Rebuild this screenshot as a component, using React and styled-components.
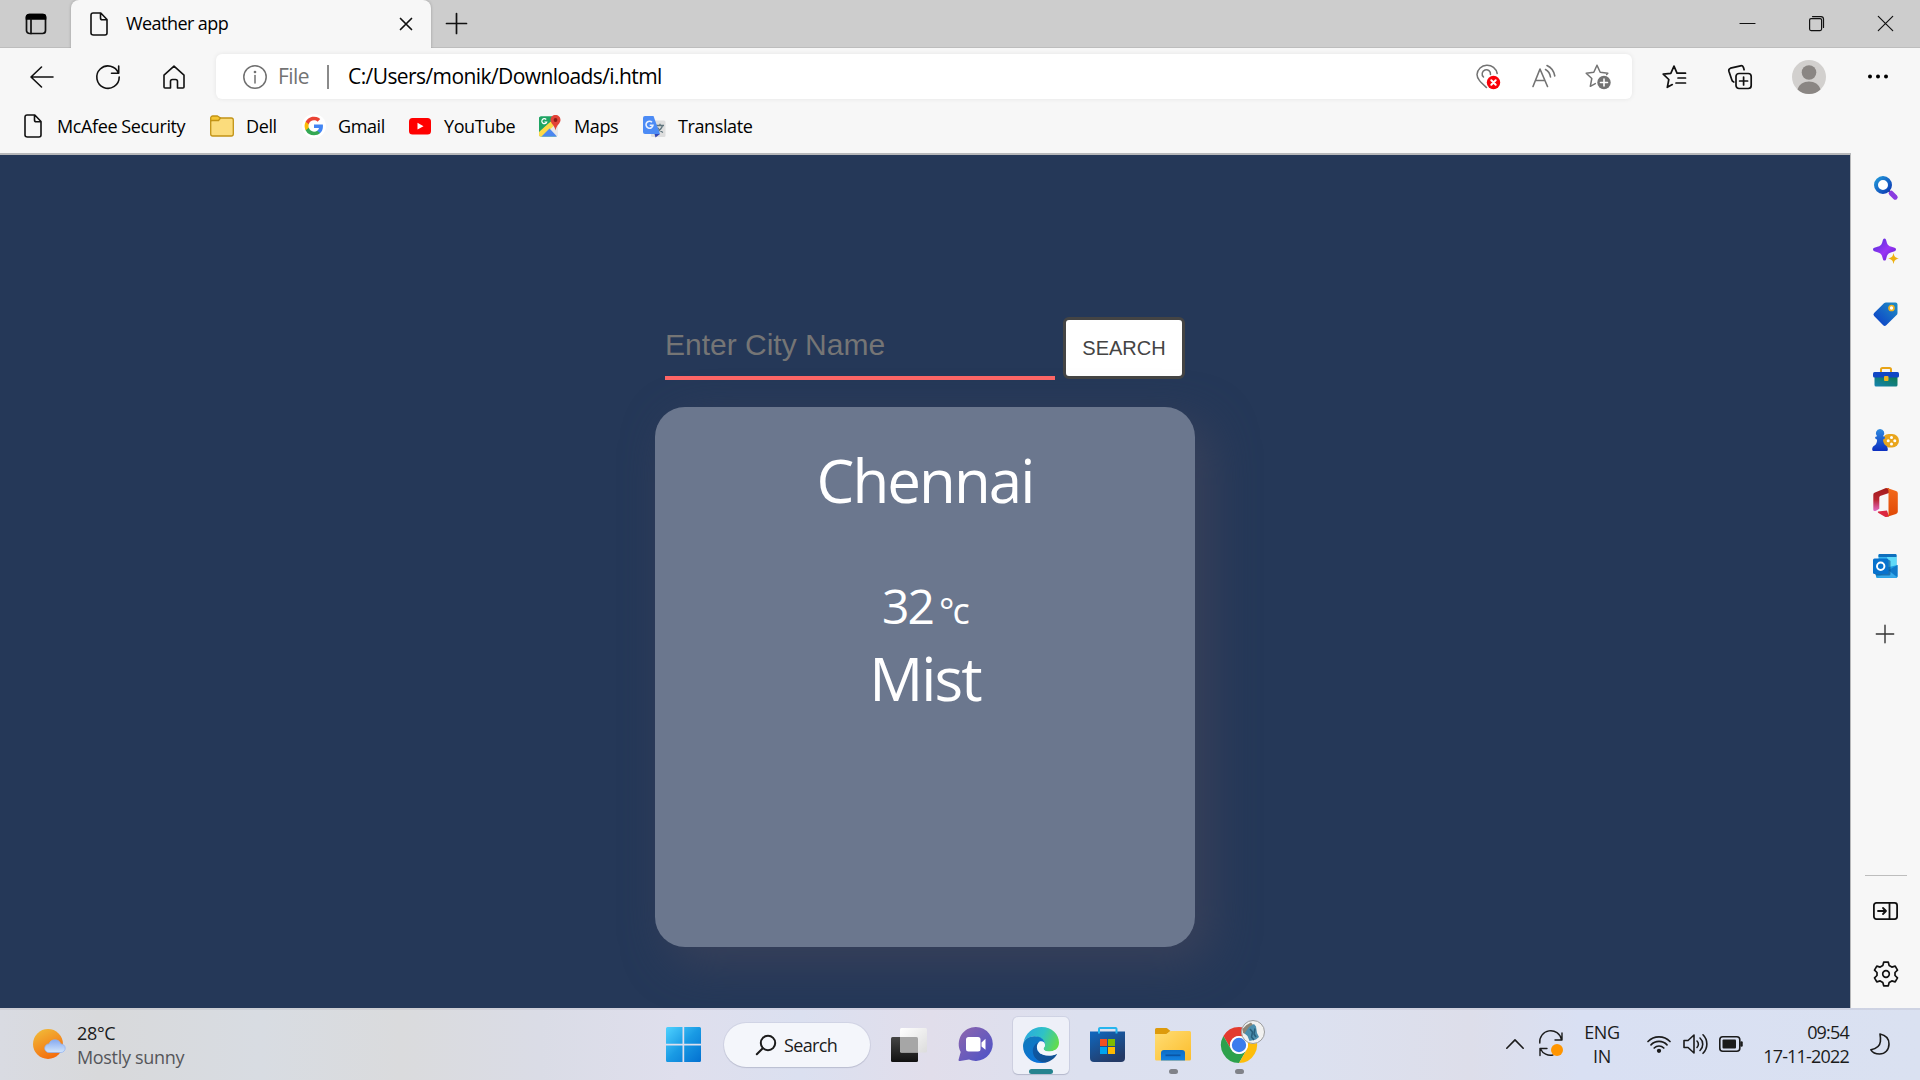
import React from "react";
import styled, { createGlobalStyle } from "styled-components";

const GlobalStyle = createGlobalStyle`
  * { box-sizing: border-box; }
  html, body { margin: 0; padding: 0; overflow: hidden; }
  body { font-family: "Open Sans", "Noto Sans", sans-serif; font-size: 18px; letter-spacing: -0.022em; color: #000; }
  svg { display: block; flex: none; overflow: visible; }
`;

const Screen = styled.div`
  width: 1920px;
  height: 1080px;
  display: flex;
  flex-direction: column;
  background: #f7f7f7;
  white-space: nowrap;
`;

/* ---------- Browser title bar ---------- */
const TitleBar = styled.header`
  height: 48px;
  display: flex;
  background: #cdcdcd;
  box-shadow: inset 0 -1px 0 #bdbdbd;
`;
const TabActions = styled.div`
  width: 71px;
  padding: 13px 0 0 25px;
`;
const Tab = styled.div`
  width: 360px;
  height: 48px;
  display: flex;
  align-items: center;
  padding: 0 18px 0 19px;
  background: #f7f7f7;
  border-radius: 8px 8px 0 0;
  box-shadow: 0 0 3px rgba(0, 0, 0, 0.25);
  clip-path: inset(0 -3px 0 -3px);
`;
const TabTitle = styled.span`
  flex: 1;
  margin-left: 18px;
  padding-bottom: 2px;
  letter-spacing: -0.031em;
`;
const NewTab = styled.div`
  padding: 12.5px 0 0 15px;
`;
const WindowControls = styled.div`
  margin-left: auto;
  display: flex;
  gap: 54px;
  padding: 16px 27px 0 0;
`;

/* ---------- Toolbar ---------- */
const Toolbar = styled.div`
  height: 57px;
  display: flex;
  align-items: center;
  padding: 0 0 0 30px;
`;
const NavButtons = styled.nav`
  width: 186px;
  display: flex;
  gap: 42px;
`;
const AddressBar = styled.div`
  width: 1416px;
  height: 45px;
  display: flex;
  align-items: center;
  background: #fff;
  border-radius: 6px;
  box-shadow: 0 0 5px rgba(0, 0, 0, 0.08);
  padding: 0 21px 0 27px;
  font-size: 21px;
  letter-spacing: -0.028em;
`;
const Scheme = styled.span`
  color: #737373;
  width: 49px;
  margin-left: 11px;
  padding-bottom: 1px;
`;
const Divider = styled.i`
  width: 2px;
  height: 24px;
  margin-right: 19px;
  background: #8a8a8a;
`;
const Url = styled.span`
  flex: 1;
  padding-bottom: 1px;
`;
const AddressIcons = styled.div`
  display: flex;
  align-items: center;
  gap: 28px;
`;
const Location = styled.div`
  margin-right: 3px;
`;
const ToolbarIcons = styled.div`
  display: flex;
  align-items: center;
  padding-left: 30px;
  gap: 42px;
`;
const Avatar = styled.div`
  width: 34px;
  margin: 0 0 0 -2px;
`;

/* ---------- Bookmarks ---------- */
const Bookmarks = styled.div`
  height: 48px;
  display: flex;
  padding: 0 0 6px 21px;
`;
const Bookmark = styled.div`
  width: ${(p) => p.$w}px;
  display: flex;
  align-items: center;
  gap: 12px;
`;
const BookmarkIcon = styled.div`
  width: 24px;
  display: flex;
  justify-content: center;
`;
const BookmarkName = styled.span`
  padding-bottom: 1px;
`;

/* ---------- Body ---------- */
const Body = styled.div`
  height: 855px;
  display: flex;
`;
const Page = styled.main`
  width: 1851px;
  border-top: 2px solid #b7b8ba;
  border-right: 1px solid #b7b8ba;
  background: #253858;
  display: flex;
  flex-direction: column;
  align-items: center;
  padding-top: 162px;
  overflow: hidden;
`;
const SearchRow = styled.form`
  display: flex;
  gap: 8px;
  align-items: flex-start;
`;
const CityInput = styled.input`
  width: 390px;
  height: 63px;
  border: 0;
  border-bottom: 4px solid #ff6666;
  padding: 0 0 3px;
  outline: none;
  background: transparent;
  color: #fff;
  font: 30px "Liberation Sans", Arial, sans-serif;
  &::placeholder { color: #757575; opacity: 1; }
`;
const SearchButton = styled.button`
  width: 122px;
  height: 62px;
  border: 3px solid #444;
  border-radius: 6px;
  background: #fff;
  color: #444;
  padding: 0;
  font: 20px "Liberation Sans", Arial, sans-serif;
`;
const Card = styled.section`
  width: 540px;
  height: 540px;
  margin-top: 27px;
  padding-top: 33px;
  border-radius: 30px;
  background: #6b778e;
  box-shadow: 15px 15px 45px rgb(57, 65, 90);
  color: #fff;
  display: flex;
  flex-direction: column;
  align-items: center;
  flex: none;
`;
const BigText = styled.div`
  font-size: 60px;
  font-weight: 450;
  line-height: 80px;
  letter-spacing: -0.032em;
`;
const Temperature = styled.div`
  height: 64px;
  margin: 54px 0 0;
  display: flex;
  align-items: baseline;
  gap: 6px;
  font-size: 48px;
  line-height: 64px;
  letter-spacing: -0.04em;
`;
const Unit = styled.span`
  font-size: 36px;
  line-height: 1;
`;

/* ---------- Sidebar ---------- */
const Sidebar = styled.aside`
  width: 69px;
  display: flex;
  flex-direction: column;
  align-items: center;
  padding-top: 3px;
`;
const SideSlot = styled.div`
  height: ${(p) => p.$h || 63}px;
  display: flex;
  align-items: center;
  justify-content: center;
  padding-right: ${(p) => p.$shift || 0}px;
`;
const SideRule = styled.div`
  width: 42px;
  height: 1px;
  background: #bdbdbd;
  margin-top: auto;
`;
const SideEnd = styled.div`
  height: 6px;
`;

/* ---------- Taskbar ---------- */
const Taskbar = styled.footer`
  height: 72px;
  display: flex;
  background: linear-gradient(90deg, #d9dbe2 0, #d8d9db 100px, #d8dce2 260px, #dadbdd 400px, #dadce6 540px, #dfdfed 680px, #dbe0f0 800px, #e1deeb 930px, #dce0ef 1080px, #dce1f0 1300px, #dddeea 1470px, #d9e0f3 1580px, #dae1f1 100%);
  box-shadow: inset 0 2px 0 rgba(120, 115, 130, 0.12);
  color: #1b1b1b;
`;
const Weather = styled.div`
  width: 650px;
  display: flex;
  padding: 14px 0 0 32px;
  gap: 11px;
`;
const TwoLines = styled.div`
  width: ${(p) => p.$w}px;
  margin: ${(p) => p.$m || 0};
  text-align: ${(p) => p.$align || "left"};
  letter-spacing: ${(p) => p.$ls || "-0.018em"};
  line-height: 23.5px;
`;
const Muted = styled.div`
  color: #55565a;
`;
const TaskSlot = styled.div`
  width: 66px;
  height: 72px;
  display: flex;
  flex-direction: column;
  align-items: center;
  justify-content: center;
  position: relative;
  padding-top: 1px;
`;
const ActiveTile = styled.div`
  width: 56px;
  height: 57px;
  display: flex;
  flex-direction: column;
  align-items: center;
  padding-top: 10px;
  margin-top: 2px;
  border-radius: 5px;
  background: #eef0f8;
  box-shadow: 0 0 0 1px rgba(160, 165, 190, 0.22), 0 1px 1px rgba(90, 95, 120, 0.25);
`;
const Indicator = styled.i`
  position: absolute;
  bottom: 6px;
  width: ${(p) => (p.$active ? 24 : 9)}px;
  height: 5px;
  border-radius: 3px;
  background: ${(p) => (p.$active ? "#26838f" : "#808289")};
`;
const SearchPill = styled.div`
  width: 146px;
  height: 44px;
  margin: 15px 6px 0 8px;
  display: flex;
  align-items: center;
  padding-left: 32px;
  gap: 8px;
  border-radius: 22px;
  background: #f4f6fb;
  letter-spacing: -0.035em;
  box-shadow: 0 0 0 1px rgba(160, 165, 190, 0.2), 0 1px 1px rgba(90, 95, 120, 0.2);
`;
const Tray = styled.div`
  margin-left: auto;
  display: flex;
  padding: 14px 28px 0 0;
`;
const TrayCell = styled.div`
  width: ${(p) => p.$w}px;
  height: 44px;
  display: flex;
  align-items: center;
  justify-content: ${(p) => (p.$end ? "flex-end" : "flex-start")};
`;

/* ---------- Icons ---------- */
const Line = ({ w, h, sw = 1.6, c = "#111", children }) => (
  <svg width={w} height={h} viewBox={`0 0 ${w} ${h}`} fill="none" stroke={c} strokeWidth={sw} strokeLinecap="round" strokeLinejoin="round">
    {children}
  </svg>
);
const FileIcon = () => (
  <Line w={18} h={24}>
    <path d="M3.5 1h7.3L17 7.5V21a2 2 0 0 1-2 2H3.500a2.500 2 0 0 1-2.500-2V3a2 2 0 0 1 2.500-2zM10.500 1.200V6a1.800 1.800 0 0 0 1.800 1.800H17" />
  </Line>
);
const FolderIcon = () => (
  <svg width="24" height="22" viewBox="0 0 24 22" stroke="#c29316" strokeWidth="1.300">
    <path d="M.7 6V19a2 2 0 0 0 2 2h18.600a2 2 0 0 0 2-2V5a2 2 0 0 0-2-2H9z" fill="#fbdc7c" />
    <path d="M.7 5.500V3a2 2 0 0 1 2-2h4.800L10.500 3 8.500 5.500z" fill="#f5c633" strokeLinejoin="round" />
  </svg>
);
const GoogleIcon = () => (
  <svg width="24" height="24" viewBox="-3.400 -3.400 30.800 30.800">
    <circle cx="12" cy="12" r="15.400" fill="#fff" />
    <path fill="#4285f4" d="M23.500 12.270c0-.8-.07-1.570-.2-2.300H12v4.500h6.450a5.500 5.500 0 0 1-2.400 3.600v3h3.880c2.270-2.090 3.570-5.170 3.570-8.800z" />
    <path fill="#34a853" d="M12 24c3.240 0 5.960-1.070 7.940-2.900l-3.880-3c-1.070.72-2.450 1.150-4.060 1.150-3.130 0-5.780-2.110-6.720-4.960H1.270v3.100A12 12 0 0 0 12 24z" />
    <path fill="#fbbc05" d="M5.280 14.290a7.200 7.200 0 0 1 0-4.580v-3.100H1.270a12 12 0 0 0 0 10.780z" />
    <path fill="#ea4335" d="M12 4.750c1.760 0 3.340.61 4.590 1.800l3.440-3.440A12 12 0 0 0 1.270 6.610l4.010 3.100C6.220 6.860 8.870 4.750 12 4.750z" />
  </svg>
);
const YouTubeIcon = () => (
  <svg width="24" height="24">
    <rect x="1" y="4" width="22" height="16.500" rx="3.500" fill="#f00" />
    <path d="M9.500 8.800v6.800l6-3.400z" fill="#fff" />
  </svg>
);
const MapsIcon = () => (
  <svg width="24" height="24">
    <rect x="1" y="2.500" width="18.500" height="20" rx="2" fill="#1fa463" />
    <path d="M1 20 15 7l5 3v12H2z" fill="#e8e8e8" />
    <path d="M1 18 15 5l4 4L4 22.500H2.500A1.500 1.500 0 0 1 1 21z" fill="#fdd947" />
    <path d="M3.500 22.500 11.500 14.500 19 22.500z" fill="#4b86ef" />
    <path d="M1 4.500a2 2 0 0 1 2-2H14v4L1 17z" fill="#1fa463" />
    <path d="M8.200 5.500A2.500 2.500 0 1 0 8.700 8H6.400" fill="none" stroke="#fff" strokeWidth="1.200" />
    <path d="M17.500 1c2.800 0 5 2 5 5 0 3.600-4 4.800-5 10.500C16.500 10.800 12.500 9.600 12.500 6c0-3 2.200-5 5-5z" fill="#e24338" />
    <circle cx="17.500" cy="6" r="1.900" fill="#8a1c16" />
  </svg>
);
const TranslateIcon = () => (
  <svg width="24" height="24">
    <rect x="9" y="6.500" width="14.500" height="16.500" rx="1.500" fill="#dedede" />
    <path d="M13.500 11.500H22M18 9.800v1.700M20.500 11.500c-.8 3-3 5-5.500 6.300M15.500 13.500c1 2 3 4 5.500 5" stroke="#60757d" strokeWidth="1.300" fill="none" />
    <path d="M3 2h8.500l6.500 18H3a2 2 0 0 1-2-2V4a2 2 0 0 1 2-2z" fill="#4c8bf5" />
    <path d="M12.500 20H18l-4.500 3.500z" fill="#3448b5" />
    <path d="M10 8.200A3.500 3.500 0 1 0 11 11.200H7.700" fill="none" stroke="#e8f0fe" strokeWidth="1.600" />
  </svg>
);

const SearchColor = () => (
  <svg width="24" height="24">
    <defs><linearGradient id="sc" x1="0" y1="0" x2="1" y2="1"><stop offset="0" stopColor="#2196d8" /><stop offset="1" stopColor="#0d3bb4" /></linearGradient></defs>
    <path d="M14.500 14.500 17 17" stroke="#444" strokeWidth="2" />
    <path d="m17.200 17.200 4 4" stroke="#8a3ce0" strokeWidth="5" strokeLinecap="round" />
    <circle cx="9" cy="9" r="7" fill="#fff" stroke="url(#sc)" strokeWidth="4" />
  </svg>
);
const SparkleIcon = () => (
  <svg width="26" height="26">
    <defs><linearGradient id="sp" x1="0" y1="0" x2="1" y2="1"><stop offset="0" stopColor="#4a2fd6" /><stop offset=".55" stopColor="#9a35f5" /><stop offset="1" stopColor="#5a20c8" /></linearGradient></defs>
    <path d="M11.500.500c1.200 0 1.500 1 1.900 2.600.9 3.600 1.700 5 5.900 6 2.600.7 3.700 1 3.700 2.400s-1.100 1.700-3.700 2.400c-4.200 1-5 2.400-5.900 6-.4 1.600-.7 2.600-1.900 2.600s-1.500-1-1.900-2.600c-.9-3.600-1.700-5-5.900-6C1.100 13.200 0 12.900 0 11.500s1.100-1.700 3.700-2.400c4.200-1 5-2.400 5.900-6 .4-1.600.7-2.600 1.900-2.600z" fill="url(#sp)" />
    <path d="M20.500 15c1 4 1.500 4.500 5.500 5.500-4 1-4.500 1.500-5.500 5.500-1-4-1.500-4.500-5.500-5.500 4-1 4.500-1.500 5.500-5.500z" fill="#eeb010" />
  </svg>
);
const TagIcon = () => (
  <svg width="25" height="24">
    <defs><linearGradient id="tg" x1="1" y1="0" x2="0" y2="1"><stop offset="0" stopColor="#1f8fc4" /><stop offset="1" stopColor="#0b39c8" /></linearGradient></defs>
    <path d="M13 .5h9.500A2 2 0 0 1 24.500 2.500V11a3 3 0 0 1-.9 2.100L13.200 23.200a2.200 2.200 0 0 1-3 0L1.100 14a2.200 2.200 0 0 1 0-3L11 1.300a3 3 0 0 1 2-.8z" fill="url(#tg)" />
    <circle cx="18.500" cy="6" r="2.500" fill="#fff" stroke="#efb321" strokeWidth="1.700" />
  </svg>
);
const ToolboxIcon = () => (
  <svg width="26" height="20">
    <defs><linearGradient id="tb" x1="0" y1="1" x2="1" y2="0"><stop offset="0" stopColor="#1583b0" /><stop offset="1" stopColor="#0e7a50" /></linearGradient></defs>
    <path d="M8 6V2.500A1.500 1.500 0 0 1 9.500 1h7A1.500 1.500 0 0 1 18 2.500V6" fill="none" stroke="#e8a417" strokeWidth="2" />
    <path d="M1.500 10h23v8a1.500 1.500 0 0 1-1.500 1.500H3A1.500 1.500 0 0 1 1.500 18z" fill="url(#tb)" />
    <rect x="0" y="5" width="26" height="5.500" rx="1.500" fill="#1147c4" />
    <rect x="11" y="9" width="4.500" height="5" rx="1" fill="#f0b41e" />
  </svg>
);
const GamesIcon = () => (
  <svg width="27" height="22">
    <defs><linearGradient id="gm" x1="0" y1="0" x2="0" y2="1"><stop offset="0" stopColor="#2f8be0" /><stop offset="1" stopColor="#0d2fc0" /></linearGradient></defs>
    <rect x="10" y="5" width="17" height="13.500" rx="6.750" fill="#e9a51c" />
    <g fill="#fff"><circle cx="19.500" cy="8.500" r="1.500" /><circle cx="19.500" cy="15" r="1.500" /><circle cx="16.200" cy="11.800" r="1.500" /><circle cx="22.800" cy="11.800" r="1.500" /></g>
    <path d="M8 0a4.200 4.200 0 0 1 3 7.200c1.500.2 2 .8 2 1.600s-.8 1.400-2 1.600c.2 3 1 4.600 2.800 6 1.500 1 2 2.200 2 4 0 .9-.5 1.600-1.500 1.600H2c-1 0-1.800-.7-1.800-1.600 0-1.800.5-3 2.300-4 2-1.400 2.500-3 2.600-6-1.200-.2-2-.8-2-1.600s.6-1.400 2-1.600A4.200 4.200 0 0 1 8 0z" fill="url(#gm)" />
  </svg>
);
const OfficeIcon = () => (
  <svg width="25" height="29" viewBox="0 0 25 29">
    <defs>
      <linearGradient id="of1" x1="0" y1="0" x2="0" y2="1"><stop offset="0" stopColor="#a31b1b" /><stop offset=".5" stopColor="#b92530" /><stop offset="1" stopColor="#e36bc6" /></linearGradient>
      <linearGradient id="of2" x1="0" y1="0" x2="0" y2="1"><stop offset="0" stopColor="#f36a1c" /><stop offset="1" stopColor="#e04806" /></linearGradient>
    </defs>
    <path d="M13 0 2 4.500A2.500 2.500 0 0 0 .3 7v14.500c0 1.600 1.600 2 2.800 1.200l3.200-2V9.500c0-1 .6-1.500 1.500-1.800L16 5V.3z" fill="url(#of1)" />
    <path d="m5 23.500 9-1 2 6L13.500 29c-.8 0-1.300-.2-2-.6L5.500 25c-.9-.5-.7-1.300-.5-1.500z" fill="#dc2740" />
    <path d="M13 0c1 0 1.300.1 2 .3l8 2.600A2.500 2.500 0 0 1 24.800 5.300v18.200c0 1.300-.7 2-1.800 2.500L13.500 29c1.300-.8 2-1.500 2-3V3c0-1.500-1-2.600-2.500-3z" fill="url(#of2)" />
  </svg>
);
const OutlookIcon = () => (
  <svg width="25" height="24">
    <rect x="5.500" y="0" width="18" height="15" rx="1.300" fill="#35b5f0" />
    <path d="M5.500 1.300A1.300 1.300 0 0 1 6.800 0h15.400a1.300 1.300 0 0 1 1.300 1.300V3h-18z" fill="#0f6fbd" />
    <path d="M14 3h9.500v9L14 15z" fill="#60daf8" />
    <path d="M3 13h13l8.500-2v11.500A1.500 1.500 0 0 1 23 24H4.500A1.500 1.500 0 0 1 3 22.500z" fill="#1e9de2" />
    <path d="M24.500 11v12L15 16.500z" fill="#1079c9" />
    <path d="m3.500 23.500 13-6.500 7.500 6.700z" fill="#38a9ea" />
    <rect x="2" y="6" width="15.500" height="15.500" rx="1.500" fill="#0a4c8a" opacity=".6" />
    <rect x="0" y="4.500" width="15.500" height="15.500" rx="1.500" fill="#0872cd" />
    <circle cx="7.700" cy="12.200" r="3.700" fill="none" stroke="#fff" strokeWidth="2" />
  </svg>
);
const GearIcon = () => (
  <svg width="26" height="26" viewBox="-13 -13 26 26" fill="none" stroke="#111" strokeWidth="1.700" strokeLinejoin="round">
    <path d="M-2.300-11.800H2.300L3.200-8.400 5.800-6.900 9.200-7.900 11.500-3.900 9-1.500V1.500L11.500 3.900 9.200 7.900 5.800 6.900 3.200 8.400 2.300 11.800H-2.300L-3.200 8.400-5.800 6.900-9.200 7.900-11.500 3.900-9 1.500V-1.500L-11.500-3.900-9.200-7.900-5.800-6.900-3.200-8.400z" />
    <circle r="3.300" />
  </svg>
);

const WindowsIcon = () => (
  <svg width="35" height="35">
    <defs><linearGradient id="wn" gradientUnits="userSpaceOnUse" x1="0" y1="0" x2="35" y2="35"><stop offset="0" stopColor="#4fd2ff" /><stop offset=".5" stopColor="#199ae4" /><stop offset="1" stopColor="#0370d0" /></linearGradient></defs>
    <path fill="url(#wn)" d="M1.500 0H16.500V16.800H0V1.500A1.500 1.500 0 0 1 1.500 0zM18.200 0H33.500A1.500 1.500 0 0 1 35 1.500V16.800H18.200zM0 18.400H16.500V35H1.500A1.500 1.500 0 0 1 0 33.500zM18.200 18.400H35V33.500A1.500 1.500 0 0 1 33.500 35H18.200z" />
  </svg>
);
const TaskViewIcon = () => (
  <svg width="36" height="34">
    <defs>
      <linearGradient id="tv" x1="0" y1="0" x2="0" y2="1"><stop offset="0" stopColor="#454545" /><stop offset="1" stopColor="#111" /></linearGradient>
      <linearGradient id="tw" x1="0" y1="0" x2="1" y2="1"><stop offset="0" stopColor="#fff" /><stop offset="1" stopColor="#dcdcdc" /></linearGradient>
    </defs>
    <rect x="0" y="9" width="27" height="25" rx="1.500" fill="url(#tv)" />
    <rect x="9" y="0" width="27" height="24.500" rx="1.500" fill="url(#tw)" />
    <path d="M9 9h16.500A1.500 1.500 0 0 1 27 10.500v14H10.500A1.500 1.500 0 0 1 9 23z" fill="#a6a6a6" />
  </svg>
);
const ChatIcon = () => (
  <svg width="35" height="35">
    <defs><linearGradient id="ct" x1="0" y1="0" x2="1" y2="1"><stop offset="0" stopColor="#8f66ad" /><stop offset="1" stopColor="#4a52c8" /></linearGradient></defs>
    <path d="M18 0a17 17 0 1 1-7 32.600L2 34c-1 .2-1.700-.6-1.400-1.600L2.700 25A17 17 0 0 1 18 0z" fill="url(#ct)" />
    <rect x="8" y="10" width="14.500" height="14.500" rx="2.500" fill="#fff" />
    <path d="M23.500 15.500 27.500 11.800v11L23.500 19.500z" fill="#fff" />
  </svg>
);
const EdgeIcon = () => (
  <svg width="36" height="36" viewBox="0 0 36 36">
    <defs>
      <linearGradient id="e1" x1="0" y1=".3" x2="1" y2=".6"><stop offset="0" stopColor="#2aa9e0" /><stop offset=".5" stopColor="#2fc2c6" /><stop offset="1" stopColor="#62dc4c" /></linearGradient>
      <linearGradient id="e2" x1="0" y1="0" x2=".6" y2="1"><stop offset="0" stopColor="#117ab8" /><stop offset="1" stopColor="#0a72da" /></linearGradient>
      <linearGradient id="e3" x1="0" y1="0" x2="1" y2="1"><stop offset="0" stopColor="#0d5aa8" /><stop offset="1" stopColor="#124f8f" /></linearGradient>
    </defs>
    <path d="M.5 16C2 6.500 9.500 0 18.500 0 29 0 36 7.500 36 15.500c0 5.500-4 9-9 9-4.500 0-6.500-1.500-6.500-2.800 0-1 1.500-1.400 1.500-4 0-4-4.500-8.200-10.500-8.200S2 12 .5 16z" fill="url(#e1)" />
    <path d="M22 17C21.500 12 17 9.300 11.500 9.300 5 9.300 0 13.500 0 19c0 9.500 8 17 17.500 17 2.500 0 5-.5 7-1.300L14 29z" fill="url(#e2)" />
    <path d="M16.500 15C12.500 16 9.800 19.500 9.800 24c0 6.500 6 12 13 11.500C28 34.500 32 31 33.800 27.600c.3-.7-.3-1-.9-.7-7 3.500-19.500 1.500-19-6.600.1-2 1-4 2.600-5.300z" fill="url(#e3)" />
    <path d="M16.500 14.500c3.500-.8 5.500 1 5.500 3.300 0 2.200-1.500 2.700-1.500 3.900 0 2.300 5 4.300 11.500 1.600l2.500 2.200-.9 1.500c-7 3.300-19.800 1.300-19.700-6.700 0-2.300 1-4.500 2.600-5.800z" fill="#f3f7fb" />
  </svg>
);
const StoreIcon = () => (
  <svg width="35" height="35">
    <defs><linearGradient id="st" x1="0" y1="0" x2=".6" y2="1"><stop offset="0" stopColor="#0f68c0" /><stop offset="1" stopColor="#243a66" /></linearGradient></defs>
    <path d="M0 4.500h35V31a4 4 0 0 1-4 4H4a4 4 0 0 1-4-4z" fill="url(#st)" />
    <path d="M9 6.500V1.900A1 1 0 0 1 10 1h15.500a1 1 0 0 1 1 .9v4.600" fill="none" stroke="#26b5ee" strokeWidth="2" />
    <rect x="10" y="12" width="7" height="7" fill="#f25022" /><rect x="18" y="12" width="7" height="7" fill="#7fba00" />
    <rect x="10" y="20" width="7" height="7" fill="#00a4ef" /><rect x="18" y="20" width="7" height="7" fill="#ffb900" />
  </svg>
);
const ExplorerIcon = () => (
  <svg width="36" height="33">
    <defs>
      <linearGradient id="ex" x1="0" y1="0" x2="1" y2="1"><stop offset="0" stopColor="#ffdd74" /><stop offset="1" stopColor="#fcbd2c" /></linearGradient>
      <linearGradient id="ey" x1="0" y1="0" x2="0" y2="1"><stop offset="0" stopColor="#0c6cc4" /><stop offset="1" stopColor="#1483e2" /></linearGradient>
    </defs>
    <path d="M0 1.500A1.500 1.500 0 0 1 1.500 0h9.300c1 0 1.500.2 2.200.9L15.500 3 12 6 0 7z" fill="#dd9a0b" />
    <path d="M0 6h10.500c1 0 1.700-.3 2.400-1l1.500-1.300c.5-.5 1-.7 1.700-.7h18.400A1.500 1.500 0 0 1 36 4.500V31a1.500 1.500 0 0 1-1.500 1.500h-33A1.500 1.500 0 0 1 0 31z" fill="url(#ex)" />
    <path d="M6 32.500V25a3 3 0 0 1 3-3h18a3 3 0 0 1 3 3v7.500z" fill="url(#ey)" />
    <path d="M10.500 27.300h15" stroke="#0a55a5" strokeWidth="1.700" />
  </svg>
);
const ChromeIcon = () => (
  <svg width="36" height="36" viewBox="0 0 36 36">
    <path d="M2.410 9A18 18 0 0 1 33.590 9H18a9 9 0 0 0-7.800 13.500z" fill="#e33b2e" />
    <path d="M2.410 9A18 18 0 0 0 18 36l7.790-13.500A9 9 0 0 1 10.200 22.500z" fill="#2da14c" />
    <path d="M33.590 9A18 18 0 0 1 18 36l7.790-13.500A9 9 0 0 0 18 9z" fill="#fdbd0b" />
    <circle cx="18" cy="18" r="9" fill="#fff" />
    <circle cx="18" cy="18" r="7.200" fill="#3b7ded" />
    <circle cx="32" cy="5" r="11.500" fill="#f1f1f0" stroke="#9b9c9e" strokeWidth="1" />
    <path d="m21.500 2 4-4 4.500-2.500 2.500 3-3 2.500 1 3-6 3-2.500-1z" fill="#8b8577" />
    <path d="m28 0 5-3 2 2.500L36 6l2 4-3 2.500L28.500 14l-2-5-3-2.500z" fill="#4b8fae" />
    <path d="m29 2 2.500 3-1 5 2.500 3M34 1.500 33 7l2 3" stroke="#285f7c" strokeWidth="1.500" fill="none" />
  </svg>
);
const WeatherIcon = () => (
  <svg width="34" height="32">
    <defs>
      <linearGradient id="su" x1=".2" y1="0" x2=".7" y2="1"><stop offset="0" stopColor="#f1ba38" /><stop offset="1" stopColor="#f4690c" /></linearGradient>
      <linearGradient id="cl" x1="0" y1="0" x2="0" y2="1"><stop offset="0" stopColor="#86aaf0" /><stop offset="1" stopColor="#d3e6fc" /></linearGradient>
    </defs>
    <circle cx="16" cy="16" r="15" fill="url(#su)" />
    <path d="M17 24.500a4.300 4.300 0 0 1 0-8.600 6.300 6.300 0 0 1 11.800 0 4.300 4.300 0 0 1 .2 8.600z" fill="url(#cl)" stroke="#8fb2f2" strokeWidth=".7" />
  </svg>
);

const BOOKMARKS = [
  ["McAfee Security", FileIcon, 189],
  ["Dell", FolderIcon, 92],
  ["Gmail", GoogleIcon, 106],
  ["YouTube", YouTubeIcon, 130],
  ["Maps", MapsIcon, 104],
  ["Translate", TranslateIcon, 120],
];
const SIDE = [SearchColor, SparkleIcon, TagIcon, ToolboxIcon, GamesIcon, OfficeIcon, OutlookIcon];

export default function App() {
  return (
    <Screen>
      <GlobalStyle />
      <TitleBar>
        <TabActions>
          <Line w={22} h={22} sw={1.7}>
            <rect x="1.500" y="1.500" width="19" height="19" rx="3" />
            <path d="M1.500 6V4a2.500 2.500 0 0 1 2.500-2.500h14A2.500 2.500 0 0 1 20.500 4v2z" fill="#000" stroke="#000" />
            <path d="M6 6v14.500" />
          </Line>
        </TabActions>
        <Tab>
          <FileIcon />
          <TabTitle>Weather app</TabTitle>
          <Line w={14} h={14} sw={1.7}><path d="M1.500 1.500l11 11M12.500 1.500l-11 11" /></Line>
        </Tab>
        <NewTab><Line w={21} h={21} sw={1.7}><path d="M10.500.5v20M.5 10.500h20" /></Line></NewTab>
        <WindowControls>
          <Line w={15} h={15} sw={1.2}><path d="M0 7.500h15" /></Line>
          <Line w={15} h={15} sw={1.2}><rect x=".6" y="2.600" width="12" height="12" rx="1.500" /><path d="M3.500.6H12A2.500 2.500 0 0 1 14.500 3v8.500" /></Line>
          <Line w={15} h={15} sw={1.2}><path d="M.3.3l14.400 14.400M14.700.3.3 14.700" /></Line>
        </WindowControls>
      </TitleBar>

      <Toolbar>
        <NavButtons>
          <Line w={24} h={24}><path d="M23 12H1.200M11.500 2 1 12l10.500 10" /></Line>
          <Line w={24} h={24}><path d="M22.500 8.200A11.200 11.200 0 1 0 23.200 12M22.700 1v7.200h-7.200" /></Line>
          <Line w={24} h={24}><path d="M2 10.200 12 1.200l10 9V22a1 1 0 0 1-1 1h-5.500v-6.500a2 2 0 0 0-2-2h-3a2 2 0 0 0-2 2V23H3a1 1 0 0 1-1-1z" /></Line>
        </NavButtons>
        <AddressBar>
          <Line w={24} h={24} c="#707070" sw={1.5}><circle cx="12" cy="12" r="11.200" /><path d="M12 10.500v7.500" /><circle cx="12" cy="7" r=".6" fill="#707070" /></Line>
          <Scheme>File</Scheme>
          <Divider />
          <Url>C:/Users/monik/Downloads/i.html</Url>
          <AddressIcons>
            <Location>
              <Line w={25} h={26} c="#737373" sw={1.5}>
                <path d="M10.500 23.500C5 18.500 1 15 1 10.500a10.200 10.200 0 0 1 20.200-1" /><path d="M7.500 13a4.200 4.200 0 1 1 7-2.500" />
                <circle cx="17.500" cy="18.500" r="6.700" fill="#fa0008" stroke="none" /><path d="m15.300 16.300 4.400 4.400m0-4.400-4.400 4.400" stroke="#fff" strokeWidth="2" />
              </Line>
            </Location>
            <Line w={25} h={26} c="#737373" sw={1.6}>
              <path d="M1 22.500 8 5l7.500 17.500M3.500 16.500h9.500M13.500 5.500c3 1.600 4.500 4 5 7.500M15 1.500c4.500 2 7 6 7.800 10.500" />
            </Line>
            <Line w={26} h={26} c="#737373" sw={1.5}>
              <path d="M12 1.200 8.800 8.300 1.200 9.200l5.600 5.300L5.300 22.300l5-2.700M12 1.200l3.200 7.100 7.600.9-1.200 1.300" />
              <circle cx="19" cy="18.500" r="6.700" fill="#737373" stroke="none" /><path d="M19 15v7M15.500 18.500h7" stroke="#fff" strokeWidth="1.600" />
            </Line>
          </AddressIcons>
        </AddressBar>
        <ToolbarIcons>
          <Line w={24} h={24} sw={1.7}><path d="M12 1.200 8.800 8.300 1.200 9.200l5.600 5.300L5.300 22.300l5-2.700M12 1.200l3 7H23.500M16 13h7.500M14 18h9.500" /></Line>
          <Line w={24} h={24} sw={1.7}>
            <rect x="8" y="8.500" width="15.200" height="15" rx="3" /><path d="M15.600 12v8M11.600 16h8" />
            <path d="M5.800 17C4.500 16.500 4 15.800 3.700 14.500L.9 6.200C.5 4.700 1.200 3.700 2.500 3.200L12.500.8c1.500-.3 2.400.3 2.900 1.500l.7 2.500" />
          </Line>
          <Avatar>
            <svg width="34" height="34" viewBox="0 0 34 34">
              <circle cx="17" cy="17" r="17" fill="#d2d0ce" /><circle cx="17" cy="12.500" r="7.300" fill="#8a8683" />
              <path d="M5.500 29.400C7 24.500 11.500 21.500 17 21.500s10 3 11.500 7.900A17 17 0 0 1 17 34 17 17 0 0 1 5.500 29.400z" fill="#8a8683" />
            </svg>
          </Avatar>
          <svg width="20" height="5"><circle cx="2" cy="2.500" r="2" /><circle cx="10" cy="2.500" r="2" /><circle cx="18" cy="2.500" r="2" /></svg>
        </ToolbarIcons>
      </Toolbar>

      <Bookmarks>
        {BOOKMARKS.map(([name, Icon, w]) => (
          <Bookmark key={name} $w={w}><BookmarkIcon><Icon /></BookmarkIcon><BookmarkName>{name}</BookmarkName></Bookmark>
        ))}
      </Bookmarks>

      <Body>
        <Page>
          <SearchRow>
            <CityInput placeholder="Enter City Name" />
            <SearchButton type="button">SEARCH</SearchButton>
          </SearchRow>
          <Card>
            <BigText>Chennai</BigText>
            <Temperature>32<Unit>°c</Unit></Temperature>
            <BigText>Mist</BigText>
          </Card>
        </Page>
        <Sidebar>
          {SIDE.map((Icon, i) => <SideSlot key={i}><Icon /></SideSlot>)}
          <SideSlot $h={73} $shift={2}><Line w={18} h={18} sw={1.4} c="#333"><path d="M9 .3v17.400M.3 9h17.400" /></Line></SideSlot>
          <SideRule />
          <SideSlot $h={70}>
            <Line w={25} h={18} sw={1.8}><rect x=".9" y=".9" width="23.200" height="16.200" rx="2.500" /><path d="M16.500 1v16M5 9h8M10 6l3 3-3 3" /></Line>
          </SideSlot>
          <SideSlot $h={56}><GearIcon /></SideSlot>
          <SideEnd />
        </Sidebar>
      </Body>

      <Taskbar>
        <Weather>
          <TrayCell $w={34}><WeatherIcon /></TrayCell>
          <TwoLines $w={130}>28°C<Muted>Mostly sunny</Muted></TwoLines>
        </Weather>
        <TaskSlot><WindowsIcon /></TaskSlot>
        <SearchPill>
          <Line w={20} h={20} sw={2} c="#1b1b1b"><circle cx="12" cy="8" r="7.200" /><path d="M6.800 13.200.8 19.200" /></Line>
          Search
        </SearchPill>
        <TaskSlot><TaskViewIcon /></TaskSlot>
        <TaskSlot><ChatIcon /></TaskSlot>
        <TaskSlot><ActiveTile><EdgeIcon /></ActiveTile><Indicator $active /></TaskSlot>
        <TaskSlot><StoreIcon /></TaskSlot>
        <TaskSlot><ExplorerIcon /><Indicator /></TaskSlot>
        <TaskSlot><ChromeIcon /><Indicator /></TaskSlot>
        <Tray>
          <TrayCell $w={33}><Line w={18} h={10} c="#1b1b1b"><path d="M.8 9.200 9 .9l8.200 8.300" /></Line></TrayCell>
          <TrayCell $w={36}>
            <Line w={24} h={24} sw={1.4} c="#1b1b1b">
              <path d="M.8 11A11 11 0 0 1 22.500 7.500M23 1v7h-7M14 23A11 11 0 0 1 1.500 17M1 23.500v-7h7" />
              <circle cx="18" cy="18" r="6" fill="#ff9500" stroke="none" />
            </Line>
          </TrayCell>
          <TwoLines $w={54} $align="center" $m="-1px 18px 0 0">ENG<div>IN</div></TwoLines>
          <TrayCell $w={36}>
            <Line w={24} h={18} sw={1.7} c="#1b1b1b">
              <path d="M1 6.500a15.500 15.500 0 0 1 22 0M4 9.800a11.200 11.200 0 0 1 16 0M7.200 13a6.800 6.800 0 0 1 9.600 0" />
              <circle cx="12" cy="15.800" r="1.300" fill="#1b1b1b" />
            </Line>
          </TrayCell>
          <TrayCell $w={36}>
            <Line w={24} h={20} c="#1b1b1b">
              <path d="M1 6.500h4L11 1v18l-6-5.500H1zM14 7a4.500 4.500 0 0 1 0 6.500M17 4a8.500 8.500 0 0 1 0 12.500M20 .8a13 13 0 0 1 0 18.500" />
            </Line>
          </TrayCell>
          <TrayCell $w={43}>
            <Line w={24} h={16} c="#1b1b1b"><rect x=".8" y=".8" width="20" height="14.400" rx="3" /><rect x="3.500" y="3.500" width="13.500" height="9" rx="1" fill="#1b1b1b" stroke="none" /><path d="M22.500 6.500v3" strokeWidth="2.500" /></Line>
          </TrayCell>
          <TwoLines $w={87} $align="right" $m="-1px 0 0" $ls="-0.045em">09:54<div>17-11-2022</div></TwoLines>
          <TrayCell $w={43} $end>
            <Line w={22} h={22} c="#1b1b1b"><path d="M10 1c6 1.200 9 5 9 10 0 6-4 10-9.500 10C5.500 21 2.500 19.500.9 16.800c5.500-1 9-3.500 9.500-8.300C10.600 5.500 10.400 3.200 10 1z" /></Line>
          </TrayCell>
        </Tray>
      </Taskbar>
    </Screen>
  );
}
